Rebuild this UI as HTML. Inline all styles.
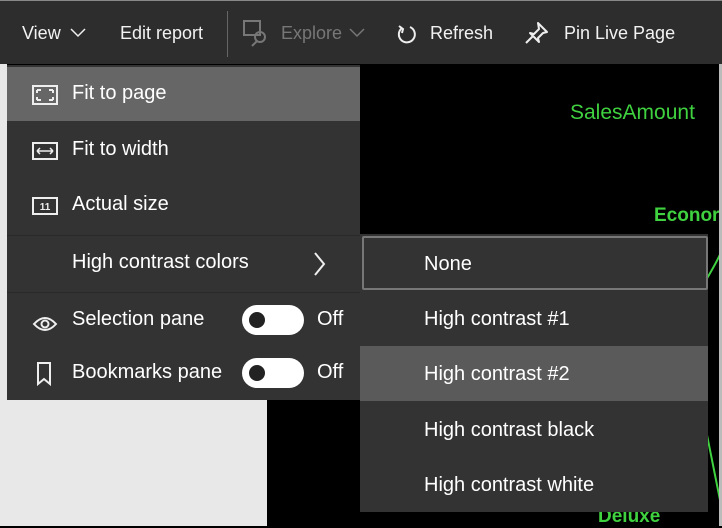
<!DOCTYPE html>
<html><head><style>
*{margin:0;padding:0;box-sizing:border-box}
body{width:722px;height:526px;overflow:hidden;background:#000;font-family:"Liberation Sans",sans-serif;color:#fff;position:relative}
.abs{position:absolute}
.tb{left:0;top:0;width:722px;height:64px;background:#2d2d2d;border-top:1px solid #888}
.tb span{position:absolute;top:22px;font-size:18px;white-space:nowrap;color:#f2f2f2}
.menu{left:7px;top:65px;width:353px;height:335px;background:#333}
.row{position:absolute;left:0;width:353px;height:54px;font-size:20px}
.row .t{position:absolute;left:65px;top:15px;white-space:nowrap}
.sub{left:360px;top:234px;width:348px;height:278px;background:#333}
.sr{position:absolute;left:0;width:348px;height:55px;font-size:20px}
.sr .t{position:absolute;left:64px;top:17px;white-space:nowrap}
.tog{position:absolute;left:235px;top:12px;width:62px;height:30px;border-radius:15px;background:#fff}
.tog:after{content:"";position:absolute;left:7px;top:7px;width:16px;height:16px;border-radius:8px;background:#222}
.off{position:absolute;left:310px;top:15px;font-size:20px}
.g{color:#3fd13f;font-size:21px;position:absolute;white-space:nowrap}
</style></head><body>
<div class="abs tb">
<span style="left:22px">View</span>
<svg class="abs" style="left:70px;top:27px" width="16" height="10"><path d="M1 1l7 7 7-7" stroke="#eee" stroke-width="1.5" fill="none"/></svg>
<span style="left:120px">Edit report</span>
<div class="abs" style="left:227px;top:10px;width:1px;height:46px;background:#666"></div>
<svg class="abs" style="left:242px;top:18px" width="28" height="28"><rect x="2" y="2" width="16" height="14" fill="none" stroke="#777" stroke-width="2"/><circle cx="18" cy="18" r="5" fill="none" stroke="#777" stroke-width="2"/><path d="M15 22l-5 5" stroke="#777" stroke-width="2"/></svg>
<span style="left:281px;color:#777">Explore</span>
<svg class="abs" style="left:349px;top:27px" width="16" height="10"><path d="M1 1l7 7 7-7" stroke="#777" stroke-width="1.5" fill="none"/></svg>
<svg class="abs" style="left:396px;top:22px" width="22" height="22"><path d="M6 5A8 8 0 1 0 14 4" stroke="#eee" stroke-width="2" fill="none"/><path d="M3 3l4 3-1 4" stroke="#eee" stroke-width="2" fill="none"/></svg>
<span style="left:430px">Refresh</span>
<svg class="abs" style="left:524px;top:19px" width="26" height="26"><path d="M14 3l9 9-4 1-5 5 1 4-9-9 4 1 5-5z M9 16l-7 7" stroke="#eee" stroke-width="2" fill="none" stroke-linejoin="round"/></svg>
<span style="left:564px">Pin Live Page</span>
</div>
<div class="abs" style="left:0;top:64px;width:7px;height:336px;background:#e8e8e8"></div>
<div class="abs" style="left:0;top:400px;width:267px;height:126px;background:#e8e8e8"></div>
<div class="g" style="left:570px;top:101px">SalesAmount</div>
<div class="g" style="left:654px;top:205px;font-weight:bold;font-size:19px">Econor</div>
<div class="g" style="left:598px;top:506px;font-weight:bold;font-size:19px">Deluxe</div>
<svg class="abs" style="left:706px;top:240px" width="16" height="286"><path d="M0 40 Q12 20 16 10 M0 190 Q10 240 16 270" stroke="#3fd13f" stroke-width="2" fill="none"/></svg>
<div class="abs" style="left:719px;top:64px;width:3px;height:462px;background:#bbb"></div>
<div class="abs menu">
<div class="row" style="top:2px;background:#666"><svg class="abs" style="left:25px;top:18px" width="26" height="20"><rect x="1" y="1" width="24" height="18" fill="none" stroke="#eee" stroke-width="2"/><path d="M5 5h4M5 5v3M21 5h-4M21 5v3M5 15h4M5 15v-3M21 15h-4M21 15v-3" stroke="#eee" stroke-width="2"/></svg><span class="t">Fit to page</span></div>
<div class="row" style="top:58px"><svg class="abs" style="left:25px;top:19px" width="26" height="18"><rect x="1" y="1" width="24" height="16" fill="none" stroke="#eee" stroke-width="2"/><path d="M5 9h16M5 9l3-3M5 9l3 3M21 9l-3-3M21 9l-3 3" stroke="#eee" stroke-width="1.5"/></svg><span class="t">Fit to width</span></div>
<div class="row" style="top:113px"><svg class="abs" style="left:25px;top:19px" width="26" height="18"><rect x="1" y="1" width="24" height="16" fill="none" stroke="#eee" stroke-width="2"/><text x="13" y="13" font-size="10" font-weight="bold" fill="#eee" text-anchor="middle" font-family="Liberation Sans">11</text></svg><span class="t">Actual size</span></div>
<div class="row" style="top:170px;border-top:1px solid #2a2a2a"><span class="t">High contrast colors</span><svg class="abs" style="left:306px;top:15px" width="14" height="26"><path d="M2 2l9 11-9 11" stroke="#eee" stroke-width="2" fill="none"/></svg></div>
<div class="row" style="top:227px;border-top:1px solid #2a2a2a"><svg class="abs" style="left:25px;top:21px" width="26" height="18"><path d="M2 10Q13 -2 24 10Q13 22 2 10z" fill="none" stroke="#eee" stroke-width="2"/><circle cx="13" cy="10" r="3.5" fill="none" stroke="#eee" stroke-width="2"/></svg><span class="t">Selection pane</span><div class="tog"></div><span class="off">Off</span></div>
<div class="row" style="top:281px"><svg class="abs" style="left:29px;top:15px" width="16" height="26"><path d="M2 2h12v21l-6-5-6 5z" fill="none" stroke="#eee" stroke-width="2"/></svg><span class="t">Bookmarks pane</span><div class="tog"></div><span class="off">Off</span></div>
</div>
<div class="abs sub">
<div class="sr" style="top:2px;left:2px;width:346px;border:2px solid #777;border-radius:2px;height:54px"><span class="t" style="left:60px;top:15px">None</span></div>
<div class="sr" style="top:57px"><span class="t">High contrast #1</span></div>
<div class="sr" style="top:112px;background:#5a5a5a"><span class="t">High contrast #2</span></div>
<div class="sr" style="top:168px"><span class="t">High contrast black</span></div>
<div class="sr" style="top:223px"><span class="t">High contrast white</span></div>
</div>
</body></html>
